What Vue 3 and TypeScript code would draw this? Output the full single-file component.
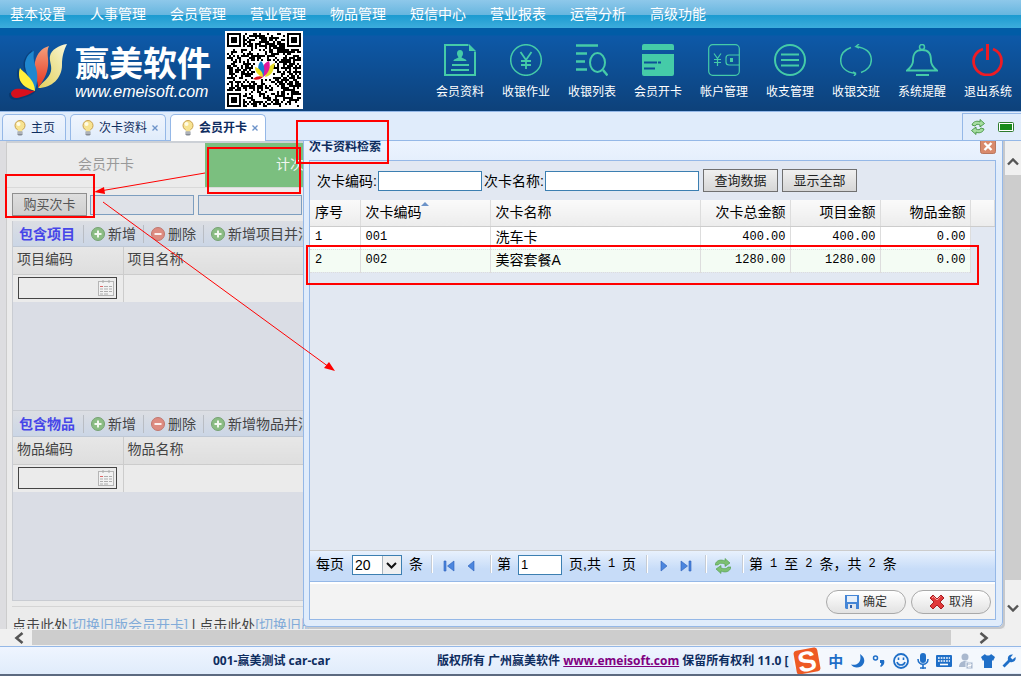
<script setup lang="ts">
interface MainAction { label: string; icon: string }
interface CardRow { no: number; code: string; name: string; total: string; items: string; goods: string }

const menu: string[] = ['基本设置', '人事管理', '会员管理', '营业管理', '物品管理', '短信中心', '营业报表', '运营分析', '高级功能']

const actions: MainAction[] = [
  { label: '会员资料', icon: 'profile' },
  { label: '收银作业', icon: 'yen' },
  { label: '收银列表', icon: 'search' },
  { label: '会员开卡', icon: 'card' },
  { label: '帐户管理', icon: 'wallet' },
  { label: '收支管理', icon: 'list' },
  { label: '收银交班', icon: 'cycle' },
  { label: '系统提醒', icon: 'bell' },
  { label: '退出系统', icon: 'power' },
]

const tabs = [
  { label: '主页', closable: false, active: false },
  { label: '次卡资料', closable: true, active: false },
  { label: '会员开卡', closable: true, active: true },
]

const sections = [
  { id: 'item', title: '包含项目', both: '新增项目并消费', code: '项目编码', name: '项目名称' },
  { id: 'goods', title: '包含物品', both: '新增物品并消费', code: '物品编码', name: '物品名称' },
]

const rows: CardRow[] = [
  { no: 1, code: '001', name: '洗车卡', total: '400.00', items: '400.00', goods: '0.00' },
  { no: 2, code: '002', name: '美容套餐A', total: '1280.00', items: '1280.00', goods: '0.00' },
]

const QR_SIZE = 37

function buildQr(): string {
  let seed = 20117
  let d = ''
  const inFinder = (x: number, y: number): boolean =>
    (x < 8 && y < 8) || (x > QR_SIZE - 9 && y < 8) || (x < 8 && y > QR_SIZE - 9)
  for (let y = 0; y < QR_SIZE; y++) {
    for (let x = 0; x < QR_SIZE; x++) {
      seed = (seed * 1103515245 + 12345) % 2147483648
      const dark = Math.floor(seed / 65536) % 100 < 50
      const centre = x > 13 && x < 23 && y > 13 && y < 23
      const align = x > 27 && x < 33 && y > 27 && y < 33
      if (dark && !inFinder(x, y) && !centre && !align) d += `M${x} ${y}h1v1h-1z`
    }
  }
  return d
}
const qrPath = buildQr()
const finders = [[0, 0], [30, 0], [0, 30]]
</script>

<template>
  <div class="app">
    <nav class="menu">
      <a v-for="m in menu" :key="m" href="#">{{ m }}</a>
    </nav>

    <header class="banner">
      <svg class="logo" width="60" height="60" viewBox="0 0 60 60" aria-hidden="true">
        <defs>
          <linearGradient id="leafCream" x1="0" y1="1" x2="1" y2="0"><stop offset="0" stop-color="#e3cf5c" /><stop offset=".6" stop-color="#efe6a0" /><stop offset="1" stop-color="#fbf8da" /></linearGradient>
          <linearGradient id="leafRed" x1="0" y1="1" x2="0" y2="0"><stop offset="0" stop-color="#e6321e" /><stop offset="1" stop-color="#f3a07c" /></linearGradient>
        </defs>
        <path d="M1 51c-1 8 8 8 14 5 6-2 10-3 13-7l-2-1zM10 26c-3 8 1 15 6 19l2-4zM24 8c-9 7-10 14-7 21l3-2z" fill="#062d5e" opacity=".5" />
        <path d="M30 46C44 46 54 36 54 23c0-9 2-15 5-21C51 3 43 8 42 14c-1 5 2 9 1 15-2 8-8 10-13 17z" fill="url(#leafCream)" />
        <path d="M30 46C31 39 24 31 27 20c2-9 7-14 14-16-3 6 0 12-1 20-1 9-5 15-10 22z" fill="url(#leafRed)" />
        <path d="M27 48C25 40 16 31 17 21c1-6 4-10 9-12-1 6 0 9 1 14 3 8 3 16 0 25z" fill="#1e87cf" />
        <path d="M27 49C17 46 11 41 11 33c0-3 0-4 1-7 2 3 5 4 8 8 4 4 7 9 7 15z" fill="#fff03c" />
        <path d="M27 49c-5 3-9 5-14 6-5 2-9 1-10-3 0-4 5-6 10-5 5 0 9 2 14 2z" fill="#d8101c" />
      </svg>
      <div class="brand">
        <strong>赢美软件</strong>
        <span>www.emeisoft.com</span>
      </div>
      <svg class="qr" viewBox="-1 -1 39 39" width="78" height="78" role="img" aria-label="二维码" shape-rendering="crispEdges">
        <rect x="-1" y="-1" width="39" height="39" fill="#fff" />
        <path :d="qrPath" fill="#000" />
        <g v-for="f in finders" :key="f.join()">
          <rect :x="f[0] + 0.5" :y="f[1] + 0.5" width="6" height="6" fill="none" stroke="#000" />
          <rect :x="f[0] + 2" :y="f[1] + 2" width="3" height="3" />
        </g>
        <rect x="28.5" y="28.5" width="4" height="4" fill="none" stroke="#000" />
        <rect x="30" y="30" width="1" height="1" />
        <g shape-rendering="auto">
          <path d="M19 22c4-1 4-3 5-7-3 1-4 3-5 7z" fill="#e5dc28" />
          <path d="M18 22c-1-4 0-7 3-8 1 3 0 6-3 8z" fill="#e3199a" />
          <path d="M18 22c-3-3-3-6-1-8 2 2 2 5 1 8z" fill="#1483d2" />
          <path d="M18 22c-3-1-4-3-4-5 3 1 4 3 4 5z" fill="#f0dc1e" />
          <path d="M18 22c-2-1-4 0-5 1 2 1 4 0 5-1z" fill="#e00f1c" />
        </g>
      </svg>
      <div class="actions">
        <button v-for="a in actions" :key="a.icon" type="button" :class="{ off: a.icon === 'power' }">
          <svg width="32" height="32" viewBox="0 0 32 32" fill="none" stroke="currentColor" stroke-width="1.5">
            <template v-if="a.icon === 'profile'">
              <path d="M24.500 1H1v30h30V7.500" stroke-width="2" /><path d="M25 0v7h7z" fill="currentColor" stroke="none" />
              <path d="M16 6a3.200 3.500 0 0 1 3 3.500c0 2-1 2.500-1.500 4 1.500 1 5 1.500 5 3.500h-13c0-2 3.500-2.500 5-3.500-.5-1.500-1.500-2-1.500-4A3.200 3.500 0 0 1 16 6z" fill="currentColor" stroke="none" />
              <path d="M8 21h17M7 26h18" stroke-width="2" />
            </template>
            <template v-else-if="a.icon === 'yen'">
              <circle cx="16" cy="16" r="15.300" /><path d="M10.500 8l5.500 8 5.500-8M16 16v9M11 17h10M11 21h10" stroke-width="1.800" />
            </template>
            <template v-else-if="a.icon === 'search'">
              <path d="M0 1.500h22M0 9.500h11M0 17.500h9M0 25.500h11" stroke-width="2.400" /><ellipse cx="21.500" cy="18.500" rx="7.500" ry="9.500" stroke-width="2" /><path d="M27 26l4.500 5.500" stroke-width="2.400" />
            </template>
            <template v-else-if="a.icon === 'card'">
              <path d="M2 0h28a2 2 0 0 1 2 2v4H0V2a2 2 0 0 1 2-2zM0 10h32v20a2 2 0 0 1-2 2H2a2 2 0 0 1-2-2z" fill="currentColor" stroke="none" />
              <path d="M2 18.500h13m1 0h3M2 24.500h11" stroke="#0d5198" stroke-width="1.800" />
            </template>
            <template v-else-if="a.icon === 'wallet'">
              <rect x=".7" y=".7" width="30.600" height="30.600" rx="4" stroke-width="1.200" /><path d="M31 11H21a3 3 0 0 0-3 3v4a3 3 0 0 0 3 3h10" stroke-width="1.200" /><rect x="22" y="14" width="3" height="4" fill="currentColor" stroke="none" />
              <path d="M6 9.500l3.500 5 3.500-5M9.500 14.500V22M6 15.500h7M6 18.500h7" stroke-width="1.200" />
            </template>
            <template v-else-if="a.icon === 'list'">
              <circle cx="16" cy="16" r="15" stroke-width="2" /><path d="M7 10.500h18M7 16h18M7 21.500h18" stroke-width="2" />
            </template>
            <template v-else-if="a.icon === 'cycle'">
              <path d="M11 3.500C4 6 .7 11 .7 16c0 7 5 12.500 15.300 13.500l-3-1.500m3 1.500l-2 2.500M21 28.500c7-2.500 10.300-7.500 10.300-12.500C31.300 9 26 4 16 2.500l3-2.500m-3 2.500l3 1.500" />
            </template>
            <template v-else-if="a.icon === 'bell'">
              <circle cx="16" cy="3" r="2.500" /><path d="M16 6C9 6 7 10 7 17c0 4-3 7-6 9.500h30C28 24 25 21 25 17c0-7-2-11-9-11z" stroke-width="1.900" /><path d="M10 31h13" stroke-width="2" />
            </template>
            <template v-else>
              <path d="M11 5C5 7 1.500 12 1.500 17a14 14 0 0 0 28 0c0-5-3-10-8.500-12" stroke-width="2.800" /><path d="M15.500 0v16" stroke-width="3" />
            </template>
          </svg>
          <span>{{ a.label }}</span>
        </button>
      </div>
    </header>

    <div class="tabbar">
      <div v-for="t in tabs" :key="t.label" class="tab" :class="{ active: t.active }">
        <svg width="12" height="16" viewBox="0 0 12 16" aria-hidden="true">
          <circle cx="6" cy="5.500" r="5" fill="#f7e391" stroke="#c9a04e" />
          <path d="M3 8.500c1 1 1 2 1 3h4c0-1 0-2 1-3z" fill="#f7e391" />
          <circle cx="4.500" cy="4" r="2" fill="#fffbe6" />
          <path d="M3.500 11.500h5v3l-1 1h-3l-1-1z" fill="#858b94" /><path d="M3.500 13h5" stroke="#d5d9de" />
        </svg>
        <a href="#">{{ t.label }}</a>
        <button v-if="t.closable" type="button" aria-label="关闭">
          <svg width="6" height="6" viewBox="0 0 6 6"><path d="M.5 .5l5 5m0-5l-5 5" stroke="#6d93c9" stroke-width="1.300" /></svg>
        </button>
      </div>
      <div class="tabtools">
        <button type="button" aria-label="刷新">
          <svg width="16" height="16" viewBox="0 0 16 16"><path d="M2 6c1-4 6-4.500 8-3V.500l4.500 4L10 8V6C8 5 6 5 5 7zM14 10c-1 4-6 4.500-8 3v2.500l-4.500-4L6 8v2c2 1 4 1 5-1z" fill="#a5dda0" stroke="#43923f" stroke-width=".9" /></svg>
        </button>
        <button type="button" aria-label="全屏">
          <svg width="16" height="10" viewBox="0 0 16 10"><rect x=".5" y=".5" width="15" height="9" rx="1" fill="#fff" stroke="#2d7a2d" /><rect x="2" y="2" width="12" height="6" fill="#168a1a" /></svg>
        </button>
      </div>
    </div>

    <main class="workspace">
      <div class="page">
        <div class="sheet">
          <div class="modes">
            <a href="#">会员开卡</a>
            <a href="#" class="on">计次开卡</a>
          </div>
          <div class="buy">
            <button type="button">购买次卡</button>
            <input type="text" aria-label="次卡编码">
            <input type="text" aria-label="次卡名称">
          </div>
          <section v-for="s in sections" :key="s.id">
            <div class="tools">
              <strong>{{ s.title }}</strong>
              <button type="button">
                <svg width="14" height="14" viewBox="0 0 14 14"><circle cx="7" cy="7" r="6.500" fill="#8bbd84" stroke="#76a172" /><path d="M7 3.500v7M3.500 7h7" stroke="#f4f8f2" stroke-width="2" /></svg>新增
              </button>
              <button type="button">
                <svg width="14" height="14" viewBox="0 0 14 14"><circle cx="7" cy="7" r="6.500" fill="#dd8b80" stroke="#c0766d" /><path d="M3.500 7h7" stroke="#fbf0ee" stroke-width="2" /></svg>删除
              </button>
              <button type="button">
                <svg width="14" height="14" viewBox="0 0 14 14"><circle cx="7" cy="7" r="6.500" fill="#8bbd84" stroke="#76a172" /><path d="M7 3.500v7M3.500 7h7" stroke="#f4f8f2" stroke-width="2" /></svg>{{ s.both }}
              </button>
            </div>
            <table>
              <colgroup><col class="first"><col></colgroup>
              <thead><tr><th>{{ s.code }}</th><th>{{ s.name }}</th></tr></thead>
              <tbody>
                <tr>
                  <td>
                    <div class="picker">
                      <input type="text" :aria-label="s.code">
                      <svg width="16" height="16" viewBox="0 0 16 16"><rect x=".5" y="1.500" width="15" height="14" fill="#f2f2f2" stroke="#b5b5b5" /><path d="M5 0v3M11 0v3" stroke="#aaa" /><path d="M2 6.500h3" stroke="#d66" /><path d="M6 6.500h4m1 0h3M2 9h3m1 0h4m1 0h3M2 11.500h3m1 0h4m1 0h3M2 14h3m1 0h4" stroke="#adadad" /></svg>
                    </div>
                  </td>
                  <td></td>
                </tr>
              </tbody>
            </table>
          </section>
          <p class="note">点击此处<a href="#">[切换旧版会员开卡]</a> | 点击此处<a href="#">[切换旧版]</a></p>
        </div>

        <div class="dialog" role="dialog" aria-labelledby="dialogTitle">
          <div class="caption">
            <h2 id="dialogTitle">次卡资料检索</h2>
            <button type="button" aria-label="关闭">
              <svg width="16" height="16" viewBox="0 0 16 16"><rect x=".5" y=".5" width="15" height="15" rx="2" fill="#d98a6c" stroke="#b9775f" /><path d="M4.500 5l7 7m0-7l-7 7" stroke="#fff" stroke-width="2.400" /></svg>
            </button>
          </div>
          <div class="inner">
            <form class="search" @submit.prevent>
              <label for="code">次卡编码:</label><input id="code" type="text">
              <label for="name">次卡名称:</label><input id="name" class="wide" type="text">
              <button type="button">查询数据</button>
              <button type="button">显示全部</button>
            </form>
            <div class="grid">
              <table>
                <colgroup><col class="c1"><col class="c2"><col class="c3"><col class="c4"><col class="c4"><col class="c4"><col></colgroup>
                <thead>
                  <tr>
                    <th>序号</th>
                    <th><span class="sorted">次卡编码<svg width="8" height="4" viewBox="0 0 8 4"><path d="M4 0l4 4H0z" fill="#6c93c8" /></svg></span></th>
                    <th>次卡名称</th><th class="num">次卡总金额</th><th class="num">项目金额</th><th class="num">物品金额</th><th></th>
                  </tr>
                </thead>
                <tbody>
                  <tr v-for="r in rows" :key="r.code">
                    <td class="mono">{{ r.no }}</td><td class="mono">{{ r.code }}</td><td>{{ r.name }}</td>
                    <td class="num mono">{{ r.total }}</td><td class="num mono">{{ r.items }}</td><td class="num mono">{{ r.goods }}</td><td class="void"></td>
                  </tr>
                </tbody>
              </table>
            </div>
            <div class="pager">
              <label for="size">每页</label>
              <div class="drop">
                <select id="size"><option>20</option></select>
                <svg width="19" height="18" viewBox="0 0 19 18" aria-hidden="true"><rect width="19" height="18" fill="#f0f0f0" /><path d="M.5 0v18" stroke="#a9b4bc" /><path d="M5 7l4.500 4.500L14 7" fill="none" stroke="#111" stroke-width="2" /></svg>
              </div>
              <span>条</span>
              <i></i>
              <button type="button" aria-label="首页"><svg width="12" height="12" viewBox="0 0 12 12"><path d="M1 1h2v10H1zM11 1v10L4.500 6z" fill="#4c86de" stroke="#2c60b8" stroke-width=".6" /></svg></button>
              <button type="button" aria-label="上一页"><svg width="12" height="12" viewBox="0 0 12 12"><path d="M9 1v10L3 6z" fill="#4c86de" stroke="#2c60b8" stroke-width=".6" /></svg></button>
              <i></i>
              <label for="pageNo">第</label>
              <input id="pageNo" type="text" value="1">
              <span class="words"><span>页,共</span><b>1</b><span>页</span></span>
              <i class="far"></i>
              <button type="button" aria-label="下一页"><svg width="12" height="12" viewBox="0 0 12 12"><path d="M3 1v10l6-5z" fill="#4c86de" stroke="#2c60b8" stroke-width=".6" /></svg></button>
              <button type="button" aria-label="末页"><svg width="12" height="12" viewBox="0 0 12 12"><path d="M9 1h2v10H9zM1 1v10l6.500-5z" fill="#4c86de" stroke="#2c60b8" stroke-width=".6" /></svg></button>
              <i></i>
              <button type="button" aria-label="刷新"><svg width="16" height="16" viewBox="0 0 16 16"><path d="M0 7c1-5 6-6 10-4V.500l5 4.500-5 3.500V6C7 5 4 5 3 7zM16 9c-1 5-6 6-10 4v2.500L1 11l5-3.500V10c3 1 6 1 7-1z" fill="#7cc072" stroke="#4f9a4b" stroke-width=".6" /></svg></button>
              <i></i>
              <span class="words"><span>第</span><b>1</b><span>至</span><b>2</b><span>条，共</span><b>2</b><span>条</span></span>
            </div>
            <div class="confirm">
              <button type="button">
                <svg width="14" height="14" viewBox="0 0 14 14"><path d="M0 0h14v14H1l-1-1z" fill="#4485d6" /><path d="M2 1h10v6H2z" fill="#e6effa" /><path d="M3 9h8v5H3z" fill="#dfe5ee" /><path d="M5 10h2v3H5z" fill="#2b5ca8" /></svg>确定
              </button>
              <button type="button">
                <svg width="16" height="16" viewBox="0 0 16 16"><path d="M1 4l3-3 4 4 4-4 3 3-4 4 4 4-3 3-4-4-4 4-3-3 4-4z" fill="#e0393a" stroke="#a91d22" stroke-linejoin="round" /><path d="M3 4l1.500-1.500L8 6l3.500-3.500" fill="none" stroke="#f7a3a0" /></svg>取消
              </button>
            </div>
          </div>
        </div>
      </div>
      <div class="vscroll" aria-hidden="true">
        <svg width="12" height="8" viewBox="0 0 12 8"><path d="M1 6.500L6 1.500l5 5" fill="none" stroke="#555" stroke-width="2.400" /></svg>
        <div class="thumb"></div>
        <svg width="12" height="8" viewBox="0 0 12 8"><path d="M1 1.500l5 5 5-5" fill="none" stroke="#555" stroke-width="2.400" /></svg>
      </div>
    </main>
    <div class="hscroll" aria-hidden="true">
      <svg width="10" height="12" viewBox="0 0 10 12"><path d="M8.500 1l-6 5 6 5" fill="none" stroke="#555" stroke-width="2.600" /></svg>
      <div class="thumb"></div>
      <svg width="10" height="12" viewBox="0 0 10 12"><path d="M1.500 1l6 5-6 5" fill="none" stroke="#555" stroke-width="2.600" /></svg>
    </div>

    <footer class="status">
      <span class="user">001-赢美测试 car-car</span>
      <span class="rights">版权所有 广州赢美软件 <a href="#">www.emeisoft.com</a> 保留所有权利 11.0 [</span>
      <div class="ime">
        <svg class="sogou" width="28" height="28" viewBox="0 0 28 28"><g transform="rotate(-10 14 14)"><rect x="2" y="2" width="24" height="24" rx="3" fill="#ee5a24" /><text x="14" y="24" text-anchor="middle" font-family="Liberation Sans, sans-serif" font-weight="700" font-size="28" fill="#fff">S</text></g></svg>
        <span>中</span>
        <svg width="14" height="14" viewBox="0 0 14 14"><path d="M9 0c5 3 6 9 1 12.500-4 2-8 1-10-2C6 12 11 8 9 0z" fill="#1f6fc8" /></svg>
        <svg width="14" height="14" viewBox="0 0 14 14"><circle cx="3.500" cy="4" r="2" fill="none" stroke="#1f6fc8" stroke-width="1.500" /><path d="M8 6h4c1 3 0 5-3 7l-1-1c1-1 1.500-2 1-3H8z" fill="#1f6fc8" /></svg>
        <svg width="16" height="16" viewBox="0 0 16 16"><circle cx="8" cy="8" r="7" fill="none" stroke="#1f6fc8" stroke-width="1.800" /><path d="M5.500 4.500v2.500M10.500 4.500v2.500M4 9c1 4 7 4 8 0" fill="none" stroke="#1f6fc8" stroke-width="1.600" /></svg>
        <svg width="12" height="16" viewBox="0 0 12 16"><rect x="3" y="0" width="6" height="10" rx="3" fill="#1f6fc8" /><path d="M1 6c0 7 10 7 10 0M6 12v4M3 15h6" fill="none" stroke="#1f6fc8" stroke-width="1.600" /></svg>
        <svg width="16" height="12" viewBox="0 0 16 12"><rect width="16" height="12" rx="1" fill="#1f6fc8" /><path d="M2 3h12M2 6h12" stroke="#fff" stroke-width="1.600" stroke-dasharray="1.700 1" /><path d="M4 9.500h8" stroke="#fff" stroke-width="1.600" /></svg>
        <svg width="14" height="16" viewBox="0 0 14 16"><circle cx="6" cy="4" r="3.500" fill="#a9b8ce" /><path d="M0 14c0-8 12-8 12 0z" fill="#a9b8ce" /><rect x="7" y="9" width="7" height="7" fill="#a9b8ce" stroke="#eef4fc" /><path d="M9 11h3v1.500H9V14h3" fill="none" stroke="#fff" /></svg>
        <svg width="14" height="14" viewBox="0 0 14 14"><path d="M4 0c1 2 5 2 6 0l4 3-2 4-1-1v8H3V6L2 7 0 3z" fill="#1f6fc8" /></svg>
        <svg width="14" height="14" viewBox="0 0 14 14"><path d="M13.500 3l-3 2.500-2-2L11 .5C8 0 5 2 6 6L.5 11.500l2 2L8 8c4 1 6.500-2 5.500-5z" fill="#1f6fc8" /></svg>
      </div>
    </footer>

    <svg class="marks" width="1021" height="676" viewBox="0 0 1021 676" aria-hidden="true">
      <g fill="none" stroke="#f00" stroke-width="2">
        <rect x="297" y="121" width="91" height="42" />
        <rect x="208" y="148" width="92" height="45" />
        <rect x="6" y="175" width="88" height="42" />
        <rect x="307" y="246" width="671" height="38" />
      </g>
      <path d="M205 173L100 191M103 202l226 165" stroke="#f00" stroke-width="1" />
      <path d="M94 192l10-5 1 7zM335 371l-11-3 5-6z" fill="#f00" />
    </svg>
  </div>
</template>

<style>
html, body { margin: 0; background: #e4e4e4; }
</style>

<style scoped>
.app { position: relative; display: flex; flex-direction: column; height: 100vh; overflow: hidden; box-sizing: border-box; border-bottom: 2px solid #5c6a80; font: 14px/20px "Liberation Sans", "Noto Sans CJK SC", sans-serif; color: #000; }
.app * { box-sizing: border-box; }
button, input, select { font: inherit; color: inherit; margin: 0; padding: 0; border: 0; background: none; border-radius: 0; }
svg { display: block; flex: none; }
a { color: inherit; text-decoration: none; }

.menu { display: flex; gap: 24px; height: 28px; flex: none; padding: 4px 10px; color: #fff; background: linear-gradient(#8ec8ea, #67b6df 15px, #1c9ad0 15px, #3caddc); }

.banner { display: flex; flex: none; height: 84px; border-bottom: 1px solid #95b8e7; background: linear-gradient(#015ca6 7px, #0d59a8 8px, #0d417a); color: #fff; }
.logo { margin: 14px 0 0 8px; }
.brand { display: flex; flex-direction: column; width: 150px; margin: 16px 0 0 7px; }
.brand strong { font-size: 34px; line-height: 40px; font-weight: 700; white-space: nowrap; }
.brand span { font-size: 16px; line-height: 16px; font-style: italic; }
.qr { margin-top: 3px; }
.actions { display: flex; margin-left: auto; }
.actions button { display: flex; flex-direction: column; align-items: center; width: 66px; padding-top: 16px; gap: 6px; color: #45cba8; }
.actions .off { color: #ee1c24; }
.actions span { font-size: 12px; line-height: 20px; color: #fff; }

.tabbar { display: flex; flex: none; height: 29px; gap: 4px; padding: 2px 0 0 2px; background: #e0ecfb; border-bottom: 1px solid #95b8e7; font-size: 12px; color: #0e2d5f; }
.tab { display: flex; align-items: center; gap: 5px; height: 26px; padding: 0 10px 0 11px; border: 1px solid #95b8e7; border-bottom: 0; border-radius: 5px 5px 0 0; background: linear-gradient(#f0f5fd, #e0ecfb); }
.tab button { padding: 2px 0; margin-right: -3px; }
.tab.active { height: 27px; background: #fff; font-weight: 700; }
.tabtools { display: flex; align-items: center; gap: 12px; margin: -1px 0 0 auto; padding: 0 7px; border: 1px solid #95b8e7; border-width: 1px 0 0 1px; }

.workspace { display: flex; flex: 1; min-height: 0; }
.page { position: relative; flex: 1; min-width: 0; overflow: hidden; background: #dddde0; }
.sheet { display: flex; flex-direction: column; height: 100%; margin-left: 6px; border-left: 1px solid #ccc; border-top: 2px solid #ccd0d6; background: #ebebeb; color: #444; }
.modes { display: flex; flex: none; height: 45px; border-bottom: 1px solid #d9d9d9; }
.modes a { width: 198px; line-height: 42px; text-align: center; color: #999; }
.modes .on { background: #7bbf7f; color: #f1f6f1; }
.buy { display: flex; align-items: center; flex: none; gap: 4px; padding: 5px; height: 33px; }
.buy button { width: 75px; height: 23px; margin-right: -1px; border: 1px solid #8f8f8f; background: linear-gradient(#dedede, #cfcfcf); font-size: 13px; line-height: 20px; color: #555; }
.buy input { width: 104px; height: 20px; border: 1px solid #7d9ebf; background: #dfe2e8; }
section { flex: 1; min-height: 0; margin-left: 5px; border: 1px solid #c9ccd2; border-width: 0 0 1px 1px; background: #dadde5; }
.tools { display: flex; align-items: center; height: 26px; padding-left: 6px; border-bottom: 1px solid #bfc8d4; background: linear-gradient(#dcdee3, #cbd6e6); white-space: nowrap; }
.tools strong { width: 64px; color: #4646e8; }
.tools button { display: flex; align-items: center; gap: 3px; height: 18px; width: 60px; padding-left: 7px; border-left: 1px solid #b9bdc4; }
section table { width: 100%; border-collapse: collapse; table-layout: fixed; }
.first { width: 110px; }
section th { height: 27px; padding: 0 4px 3px; text-align: left; font-weight: 400; border-bottom: 1px solid #ccc; border-right: 1px solid #ccc; background: linear-gradient(#e7e7e7, #dedede); }
section td { height: 28px; padding: 0 5px; border-right: 1px solid #ccc; background: #ebebeb; }
.picker { display: flex; align-items: center; width: 99px; height: 22px; padding-right: 2px; border: 1px solid #444; background: #ebebeb; }
.picker input { flex: 1; min-width: 0; }
.note { flex: none; height: 23px; margin: 5px 0 0 5px; padding-top: 8px; border-top: 1px solid #d5d5d5; white-space: nowrap; overflow: hidden; }
.note a { color: #82abd9; }

.dialog { position: absolute; left: 303px; right: 2px; top: -8px; bottom: 2px; display: flex; flex-direction: column; padding: 0 6px 6px 5px; border: 1px solid #95b8e7; border-radius: 5px; box-shadow: 2px 2px 0 #c6c8cc; background: linear-gradient(#eff5ff, #e0ecfb 40px); }
.caption { display: flex; justify-content: space-between; align-items: center; height: 26px; flex: none; }
.caption h2 { margin: 0; font-size: 12px; line-height: 20px; color: #0e2d5f; }
.caption button { margin-bottom: 2px; }
.inner { display: flex; flex-direction: column; flex: 1; min-height: 0; border: 1px solid #95b8e7; background: #e2e8f2; }
.search { display: flex; align-items: center; flex: none; height: 39px; padding-left: 7px; white-space: nowrap; }
.search label { width: 61px; }
.search input { width: 104px; height: 20px; margin-right: 2px; border: 1px solid #3c7fb1; background: #fff; }
.search .wide { width: 154px; margin-right: 4px; }
.search button { width: 75px; height: 23px; margin-right: 4px; border: 1px solid #707070; background: linear-gradient(#f0f0f0, #d6d6d6); font-size: 13px; line-height: 20px; color: #222; }
.grid { flex: 1; min-height: 0; }
.grid table { width: 100%; border-collapse: collapse; table-layout: fixed; }
.c1 { width: 50px; }
.c2 { width: 130px; }
.c3 { width: 210px; }
.c4 { width: 90px; }
.grid th, .grid td { padding: 0 5px; text-align: left; font-weight: 400; border-right: 1px solid #ddd; white-space: nowrap; }
.grid th { height: 26px; padding-bottom: 2px; border-bottom: 1px solid #ccc; background: linear-gradient(#fafafa, #ececec); }
.grid td { height: 23px; padding-bottom: 1px; background: #fff; border-bottom: 1px dotted #ddd; line-height: 20px; }
.grid tr:nth-child(2) td { background: #f4fcf4; }
.grid td.void, .grid tr:nth-child(2) td.void { background: none; border: 0; }
.grid .num { text-align: right; padding-right: 4px; }
.mono { font-family: "Liberation Mono", monospace; font-size: 12px; }
.sorted { position: relative; }
.sorted svg { position: absolute; right: -7px; top: -2px; }
.pager { display: flex; align-items: center; flex: none; height: 32px; padding: 0 6px 4px; border-top: 1px solid #ccc; border-bottom: 1px solid #95b8e7; background: linear-gradient(#e8f1fd, #c7dcf8 60%); white-space: nowrap; }
.pager i { width: 2px; height: 18px; margin: 0 5px 0 8px; border-left: 1px solid #c6ccd4; border-right: 1px solid #fff; }
.pager .far { margin-left: 10px; }
.pager > button { display: flex; justify-content: center; width: 22px; padding-top: 4px; }
.pager > input { width: 44px; height: 20px; margin: 2px 7px 0; padding-left: 2px; border: 1px solid #3c7fb1; background: #fff; font-size: 13px; }
.drop { display: flex; width: 50px; height: 20px; margin: 2px 7px 0 8px; border: 1px solid #3c7fb1; background: #fff; }
.drop select { appearance: none; width: 29px; padding-left: 2px; line-height: 18px; }
.words { display: flex; gap: 7px; }
.words b { font-family: "Liberation Mono", monospace; font-size: 12px; font-weight: 400; }
.confirm { display: flex; justify-content: flex-end; align-items: center; flex: none; gap: 5px; height: 37px; padding: 0 4px 0; border-top: 2px solid #fff; background: #f3f3f3; }
.confirm button { display: flex; align-items: center; justify-content: center; gap: 4px; width: 80px; height: 24px; border: 1px solid #a9a9a9; border-radius: 12px; background: linear-gradient(#fff, #e2e2e2); font-size: 12px; color: #333; }

.vscroll { display: flex; flex-direction: column; align-items: center; flex: none; width: 16px; padding: 17px 0; background: #f0f0f0; }
.vscroll .thumb { flex: 1; width: 100%; margin: 9px 0 24px; background: #cdcdcd; }
.hscroll { display: flex; align-items: center; flex: none; height: 17px; padding: 0 32px 0 14px; background: #f0f0f0; }
.hscroll .thumb { flex: 1; height: 15px; margin: 0 28px 0 8px; background: #cdcdcd; }

.status { display: flex; align-items: center; flex: none; height: 28px; border-top: 1px solid #95b8e7; background: linear-gradient(#eff5ff, #e0ecfb); font: 700 12px/20px "Open Sans", "Noto Sans CJK SC", sans-serif; color: #0e2d5f; white-space: nowrap; }
.user { width: 224px; margin-left: 213px; }
.rights { flex: 1; min-width: 0; overflow: hidden; }
.rights a { color: #800080; text-decoration: underline; }
.ime { display: flex; align-items: center; justify-content: space-between; flex: none; width: 228px; height: 24px; padding-right: 5px; background: #f4f8fd; border-radius: 12px 0 0 12px; }
.ime span { font-size: 15px; color: #1f6fc8; }
.marks { position: absolute; left: 0; top: 0; pointer-events: none; }
</style>
